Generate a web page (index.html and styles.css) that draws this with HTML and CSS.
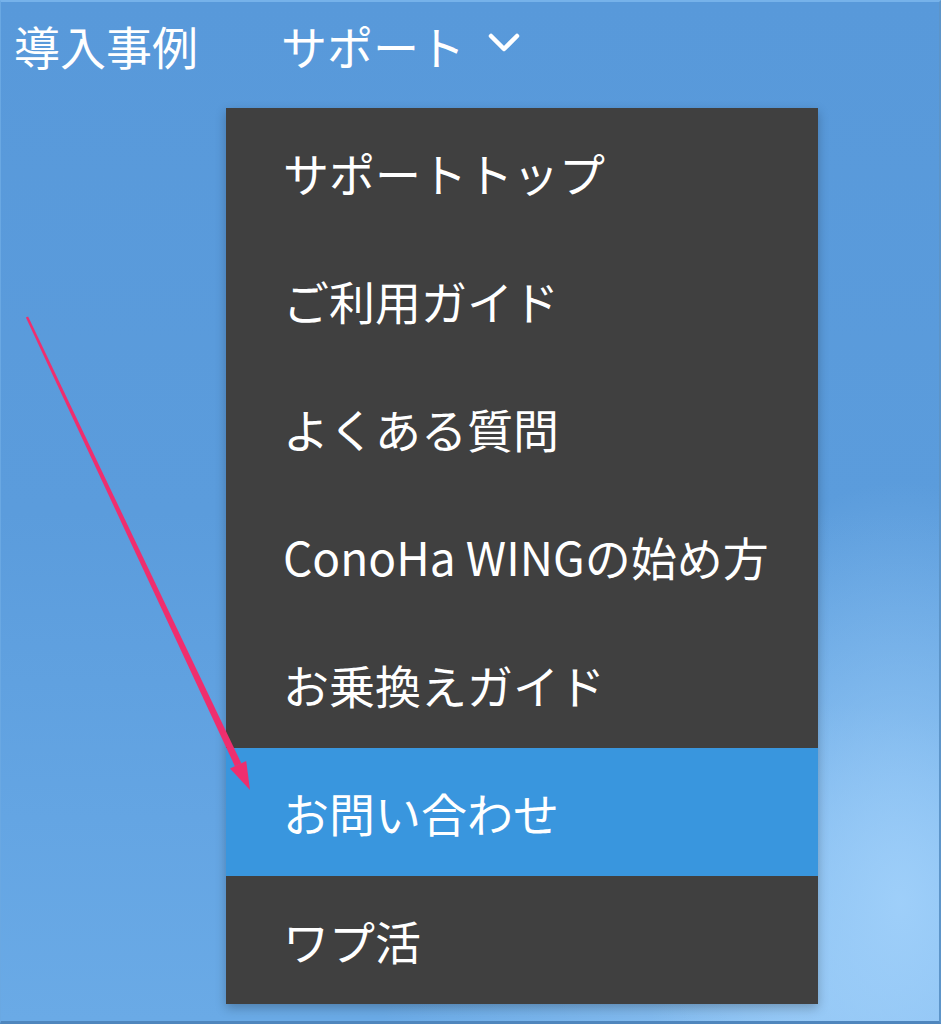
FILE: index.html
```html
<!DOCTYPE html>
<html lang="ja">
<head>
    <meta charset="UTF-8">
    <meta name="viewport" content="width=device-width, initial-scale=1.0">
    <title>サポートメニュー</title>
    <link rel="stylesheet" href="styles.css">
</head>
<body>
    <div class="screen">
        <!-- グローバルナビ -->
        <nav class="global-nav">
            <a class="nav-item">導入事例</a>
            <a class="nav-item nav-item--open">
                サポート
                <svg class="chevron" width="34" height="22" viewBox="0 0 34 22">
                    <polyline points="4,4 17,17 30,4" fill="none" stroke="#fff" stroke-width="4.5" stroke-linecap="round" stroke-linejoin="round"/>
                </svg>
            </a>
        </nav>

        <!-- ドロップダウン -->
        <ul class="dropdown">
            <li class="dropdown-item">サポートトップ</li>
            <li class="dropdown-item">ご利用ガイド</li>
            <li class="dropdown-item">よくある質問</li>
            <li class="dropdown-item">ConoHa WINGの始め方</li>
            <li class="dropdown-item">お乗換えガイド</li>
            <li class="dropdown-item is-active">お問い合わせ</li>
            <li class="dropdown-item">ワプ活</li>
        </ul>

        <!-- 注釈の矢印 -->
        <svg class="pointer" width="941" height="1024" viewBox="0 0 941 1024">
            <polygon points="25.9,317.5 28.1,316.5 241.3,763.2 234.9,766.2" fill="#ef2e6e"/>
            <polygon points="230.0,768.5 246.2,760.9 250,790" fill="#ef2e6e"/>
        </svg>
    </div>
</body>
</html>
```

FILE: styles.css
```css
html, body {
    margin: 0;
    padding: 0;
}
body {
    font-family: "Noto Sans CJK JP", "Noto Sans", sans-serif;
    color: #fff;
}
.screen {
    position: relative;
    box-sizing: border-box;
    width: 941px;
    height: 1024px;
    overflow: hidden;
    border-top: 2px solid #76b2ea;
    border-left: 1px solid #6aa8e2;
    border-right: 2px solid #5d95c9;
    border-bottom: 3px solid #4f86bd;
    background:
        radial-gradient(ellipse 260px 420px at 900px 900px, rgba(160, 208, 250, 0.95), rgba(160, 208, 250, 0) 100%),
        radial-gradient(ellipse 420px 300px at 800px 1000px, rgba(150, 200, 245, 0.8), rgba(150, 200, 245, 0) 100%),
        linear-gradient(180deg, #5899da 0%, #5b9cdc 50%, #64a5e3 80%, #6aaae6 100%);
}
.global-nav {
    display: flex;
    align-items: center;
    gap: 83px;
    padding: 17px 0 0 13px;
    height: 52px;
}
.nav-item {
    display: flex;
    align-items: center;
    font-size: 46px;
    line-height: 46px;
    color: #fff;
    text-decoration: none;
}
.chevron {
    margin-left: 22px;
    margin-top: -4px;
}
.dropdown {
    position: absolute;
    left: 225px;
    top: 106px;
    width: 592px;
    margin: 0;
    padding: 0;
    list-style: none;
    background-color: #404040;
    box-shadow: 0 4px 10px rgba(0, 0, 0, 0.25);
}
.dropdown-item {
    display: flex;
    align-items: center;
    height: 128px;
    padding-left: 57px;
    font-size: 46px;
    color: #fff;
}
.dropdown-item.is-active {
    background-color: #3996de;
}
.pointer {
    position: absolute;
    left: -1px;
    top: -2px;
    pointer-events: none;
}
```
